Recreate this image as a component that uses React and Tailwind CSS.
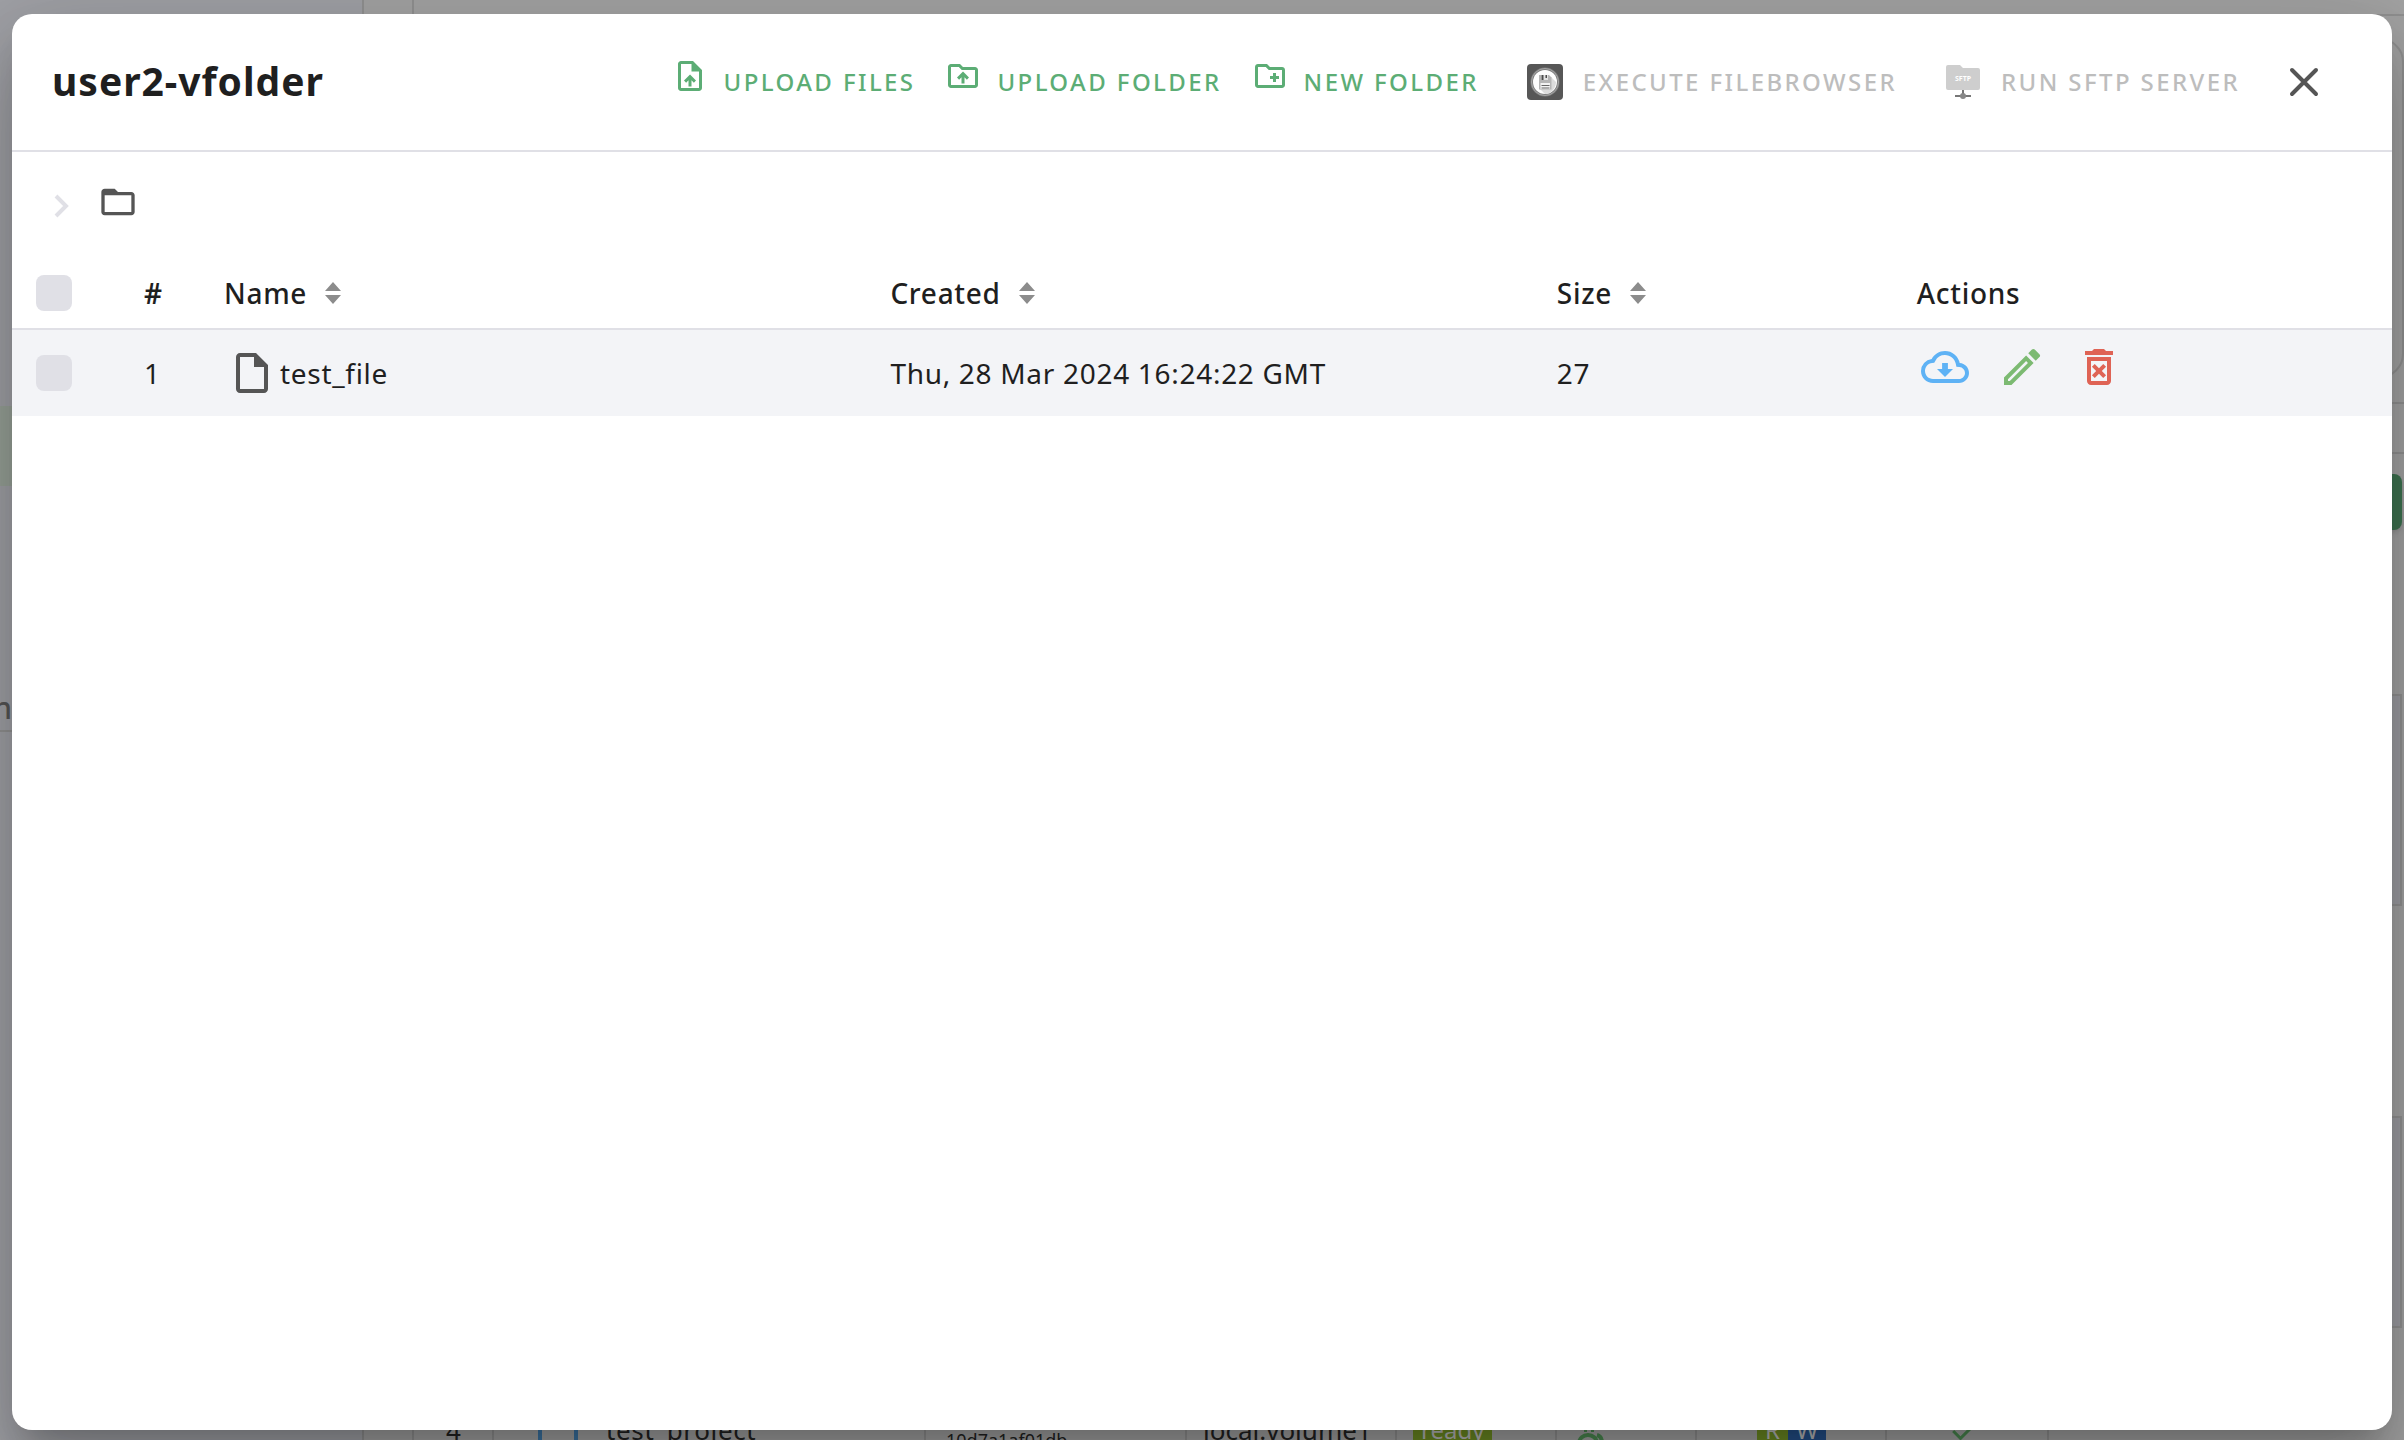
import React from "react";
import {
    MdOutlineUploadFile,
    MdOutlineDriveFolderUpload,
    MdOutlineCreateNewFolder,
    MdFolderOpen,
    MdOutlineInsertDriveFile,
    MdOutlineCloudDownload,
    MdOutlineEdit,
    MdOutlineDeleteForever,
    MdCheck,
} from "react-icons/md";

const files = [
    { id: 1, name: "test_file", created: "Thu, 28 Mar 2024 16:24:22 GMT", size: 27 },
];

const FileBrowserIcon = () => (
    <svg viewBox="0 0 36 36" className="w-9 h-9 mr-1 shrink-0">
        <rect width="36" height="36" rx="4" fill="#575757" />
        <circle cx="18" cy="18" r="14.5" fill="#7d7d7d" />
        <circle cx="18" cy="18" r="13.5" fill="none" stroke="#a5a5a5" strokeWidth="1" />
        <circle cx="18" cy="18" r="12" fill="#fdfdfd" />
        <path d="M24 13l5 5a12 12 0 0 1-11 12l-5-5z" fill="#dcdcdc" />
        <path d="M12 11h10l2.500 2.500v12h-12.500z" fill="#b5b5b5" />
        <path d="M14 11h7v5h-7z" fill="#e2e2e2" />
        <path d="M14.500 11h2v5h-2zM18.500 11h1.500v3h-1.500z" fill="#4d4d4d" />
        <path d="M13.500 19h9.500v6h-9.500z" fill="#f2f2f2" />
        <path d="M14.500 21.500h8M14.500 24h8" stroke="#666" strokeWidth="1" />
    </svg>
);

const SftpIcon = () => (
    <svg viewBox="0 0 36 36" className="w-9 h-9 mr-1 shrink-0">
        <path d="M3 1h12l3 3h15a2 2 0 0 1 2 2v18a2 2 0 0 1-2 2H3a2 2 0 0 1-2-2V3a2 2 0 0 1 2-2z" fill="#cecece" />
        <text x="18" y="17" textAnchor="middle" fontSize="7" fontWeight="700" letterSpacing="0" fill="#fff">SFTP</text>
        <path d="M18 26v5M10 32h16" stroke="#777" strokeWidth="2" />
        <circle cx="18" cy="32" r="3" fill="#888" />
    </svg>
);

const SortIcon = () => (
    <svg viewBox="0 0 16 22" className="w-4 h-[22px]" fill="#8c8c8c">
        <path d="M8 0l8 9H0zM8 22l8-9H0z" />
    </svg>
);

const ToolButton = ({ icon, children, disabled }) => (
    <button
        type="button"
        disabled={disabled}
        className="flex items-center gap-4 text-2xl font-medium tracking-widest uppercase whitespace-nowrap text-[#5cad75] disabled:text-[#bdbdbd]"
    >
        {icon}
        {children}
    </button>
);

const SortHeader = ({ children }) => (
    <button type="button" className="flex items-center gap-[18px] font-medium tracking-wide">
        {children}
        <SortIcon />
    </button>
);

const CheckBox = ({ label }) => (
    <input
        type="checkbox"
        aria-label={label}
        className="block appearance-none w-9 h-9 rounded-lg bg-[#e0e0e6]"
    />
);

const FolderDialog = () => (
    <section
        role="dialog"
        aria-label="user2-vfolder"
        className="absolute inset-x-3 top-3.5 bottom-2.5 flex flex-col bg-white rounded-[20px] overflow-hidden shadow-[0_22px_30px_-14px_rgba(0,0,0,0.2),0_48px_76px_6px_rgba(0,0,0,0.14),0_18px_92px_16px_rgba(0,0,0,0.12)]"
    >
        <header className="flex items-center h-[138px] shrink-0 pl-10 pr-[72px] border-b-2 border-[#e0e0e6]">
            <h1 className="pb-0.5 text-[39px] font-bold tracking-wide">user2-vfolder</h1>
            <div className="flex items-center gap-12 ml-auto">
                <div className="flex items-center gap-[30px]">
                    <ToolButton icon={<MdOutlineUploadFile className="w-9 h-9 mb-3" />}>Upload Files</ToolButton>
                    <ToolButton icon={<MdOutlineDriveFolderUpload className="w-9 h-9 mb-3" />}>Upload Folder</ToolButton>
                    <ToolButton icon={<MdOutlineCreateNewFolder className="w-9 h-9 mb-3" />}>New Folder</ToolButton>
                </div>
                <ToolButton disabled icon={<FileBrowserIcon />}>Execute FileBrowser</ToolButton>
                <ToolButton disabled icon={<SftpIcon />}>Run SFTP Server</ToolButton>
                <button type="button" aria-label="Close" className="text-[#555]">
                    <svg viewBox="0 0 32 32" className="w-8 h-8" fill="none" stroke="currentColor" strokeWidth="4" strokeLinecap="round">
                        <path d="M4 4l24 24M28 4L4 28" />
                    </svg>
                </button>
            </div>
        </header>

        <nav aria-label="Path" className="flex items-center gap-7 h-[95px] shrink-0 px-10 pt-1">
            <svg viewBox="0 0 18 24" className="w-[18px] h-6 mt-2" fill="none" stroke="#e0e0e6" strokeWidth="4">
                <path d="M4 2l10 10L4 22" />
            </svg>
            <button type="button" aria-label="Root folder" className="text-[#555]">
                <MdFolderOpen className="w-10 h-10" />
            </button>
        </nav>

        <table className="w-full table-fixed text-left text-[28px]">
            <thead>
                <tr className="h-[82px] border-b-2 border-[#e0e0e6] *:pt-2.5">
                    <th className="w-28 pl-6"><CheckBox label="Select all" /></th>
                    <th className="w-20 pl-5 font-semibold">#</th>
                    <th className="w-[28%] pl-5"><SortHeader>Name</SortHeader></th>
                    <th className="w-[28%] pl-5"><SortHeader>Created</SortHeader></th>
                    <th className="w-[360px] pl-5"><SortHeader>Size</SortHeader></th>
                    <th className="pl-5 font-medium tracking-wide">Actions</th>
                </tr>
            </thead>
            <tbody className="tracking-wide">
                {files.map((file) => (
                    <tr key={file.id} className="h-[87px] bg-[#f3f4f7]">
                        <td className="pl-6"><CheckBox label={file.name} /></td>
                        <td className="pl-5">{file.id}</td>
                        <td className="pl-6">
                            <div className="flex items-center gap-1">
                                <MdOutlineInsertDriveFile className="w-12 h-12 text-[#555]" />
                                {file.name}
                            </div>
                        </td>
                        <td className="pl-5">{file.created}</td>
                        <td className="pl-5">{file.size}</td>
                        <td className="pl-6 pb-3">
                            <div className="flex items-center gap-[29px]">
                                <button type="button" aria-label="Download"><MdOutlineCloudDownload className="w-12 h-12 text-[#5eb2f5]" /></button>
                                <button type="button" aria-label="Rename"><MdOutlineEdit className="w-12 h-12 text-[#7cba72]" /></button>
                                <button type="button" aria-label="Delete"><MdOutlineDeleteForever className="w-12 h-12 text-[#df6355]" /></button>
                            </div>
                        </td>
                    </tr>
                ))}
            </tbody>
        </table>
    </section>
);

// dimmed page under the dialog
const Backdrop = () => (
    <div className="flex h-full bg-[#a3a3a3] text-[26px] text-[#222]" aria-hidden="true">
        <aside className="w-[364px] shrink-0 bg-[#a0a1a6] border-r-2 border-[#919191]">
            <div className="h-[406px]"></div>
            <div className="h-20 bg-[#98a298]"></div>
            <div className="h-[246px] pt-[202px] border-b-2 border-[#919191]">
                <p className="flex justify-end w-3 text-[30px] leading-10 font-medium text-[#555]">n</p>
            </div>
        </aside>
        <div className="w-[50px] shrink-0 border-r-2 border-[#919191]"></div>
        <main className="flex flex-col grow">
            <div className="h-4 border-b-2 border-[#919191]"></div>
            <div className="h-[340px] mt-[22px] border-2 border-[#919191] rounded-3xl"></div>
            <div className="h-[26px] border-b-2 border-[#919191]"></div>
            <div className="h-[50px] border-b-2 border-[#919191]"></div>
            <div className="h-14 mt-5 mr-0.5 rounded-lg bg-[#3d7350] shadow-md"></div>
            <div className="h-[212px] mt-[164px] mr-0.5 bg-[#9c9da2] border-2 border-[#919191]"></div>
            <div className="h-[212px] mt-[210px] mr-0.5 bg-[#9c9da2] border-2 border-[#919191]"></div>
            <div className="flex h-10 mt-auto leading-[60px] whitespace-nowrap overflow-hidden *:shrink-0 *:h-15 *:border-r-2 *:border-[#919191]">
                <div className="w-20 pl-8">4</div>
                <div className="w-[432px] pl-11 flex gap-7 tracking-wide">
                    <div className="w-10 border-x-4 border-[#3c74a3]"></div>
                    test_project
                </div>
                <div className="w-[261px] pl-5 text-lg leading-[80px]">10d7a1af01db</div>
                <div className="w-[210px] pl-4">local:volume1</div>
                <div className="w-40 pl-4 flex"><span className="px-2 text-[24px] bg-[#6d8c22] text-[#bbb]">ready</span></div>
                <div className="w-[140px] pl-5">
                    <svg viewBox="0 0 28 40" className="w-7 h-10" fill="none" stroke="#4b8a51" strokeWidth="4">
                        <path d="M2 44c0-12 18-12 18 0M20 35c4 1 5 4 5 8M7 30h3M14 30h3" />
                    </svg>
                </div>
                <div className="w-[190px] pl-[60px] flex text-[24px] text-[#bbb]">
                    <span className="px-2 bg-[#6d8c22]">R</span>
                    <span className="px-2 bg-[#24508a]">W</span>
                </div>
                <div className="w-[162px] pl-[60px] pt-3"><MdCheck className="w-9 h-9 text-[#4b8a51]" /></div>
            </div>
        </main>
    </div>
);

const App = () => {
    return (
        <div className="relative h-screen overflow-hidden font-['Noto_Sans',sans-serif] text-[#1f1f1f]">
            <Backdrop />
            <FolderDialog />
        </div>
    );
};

export default App;
